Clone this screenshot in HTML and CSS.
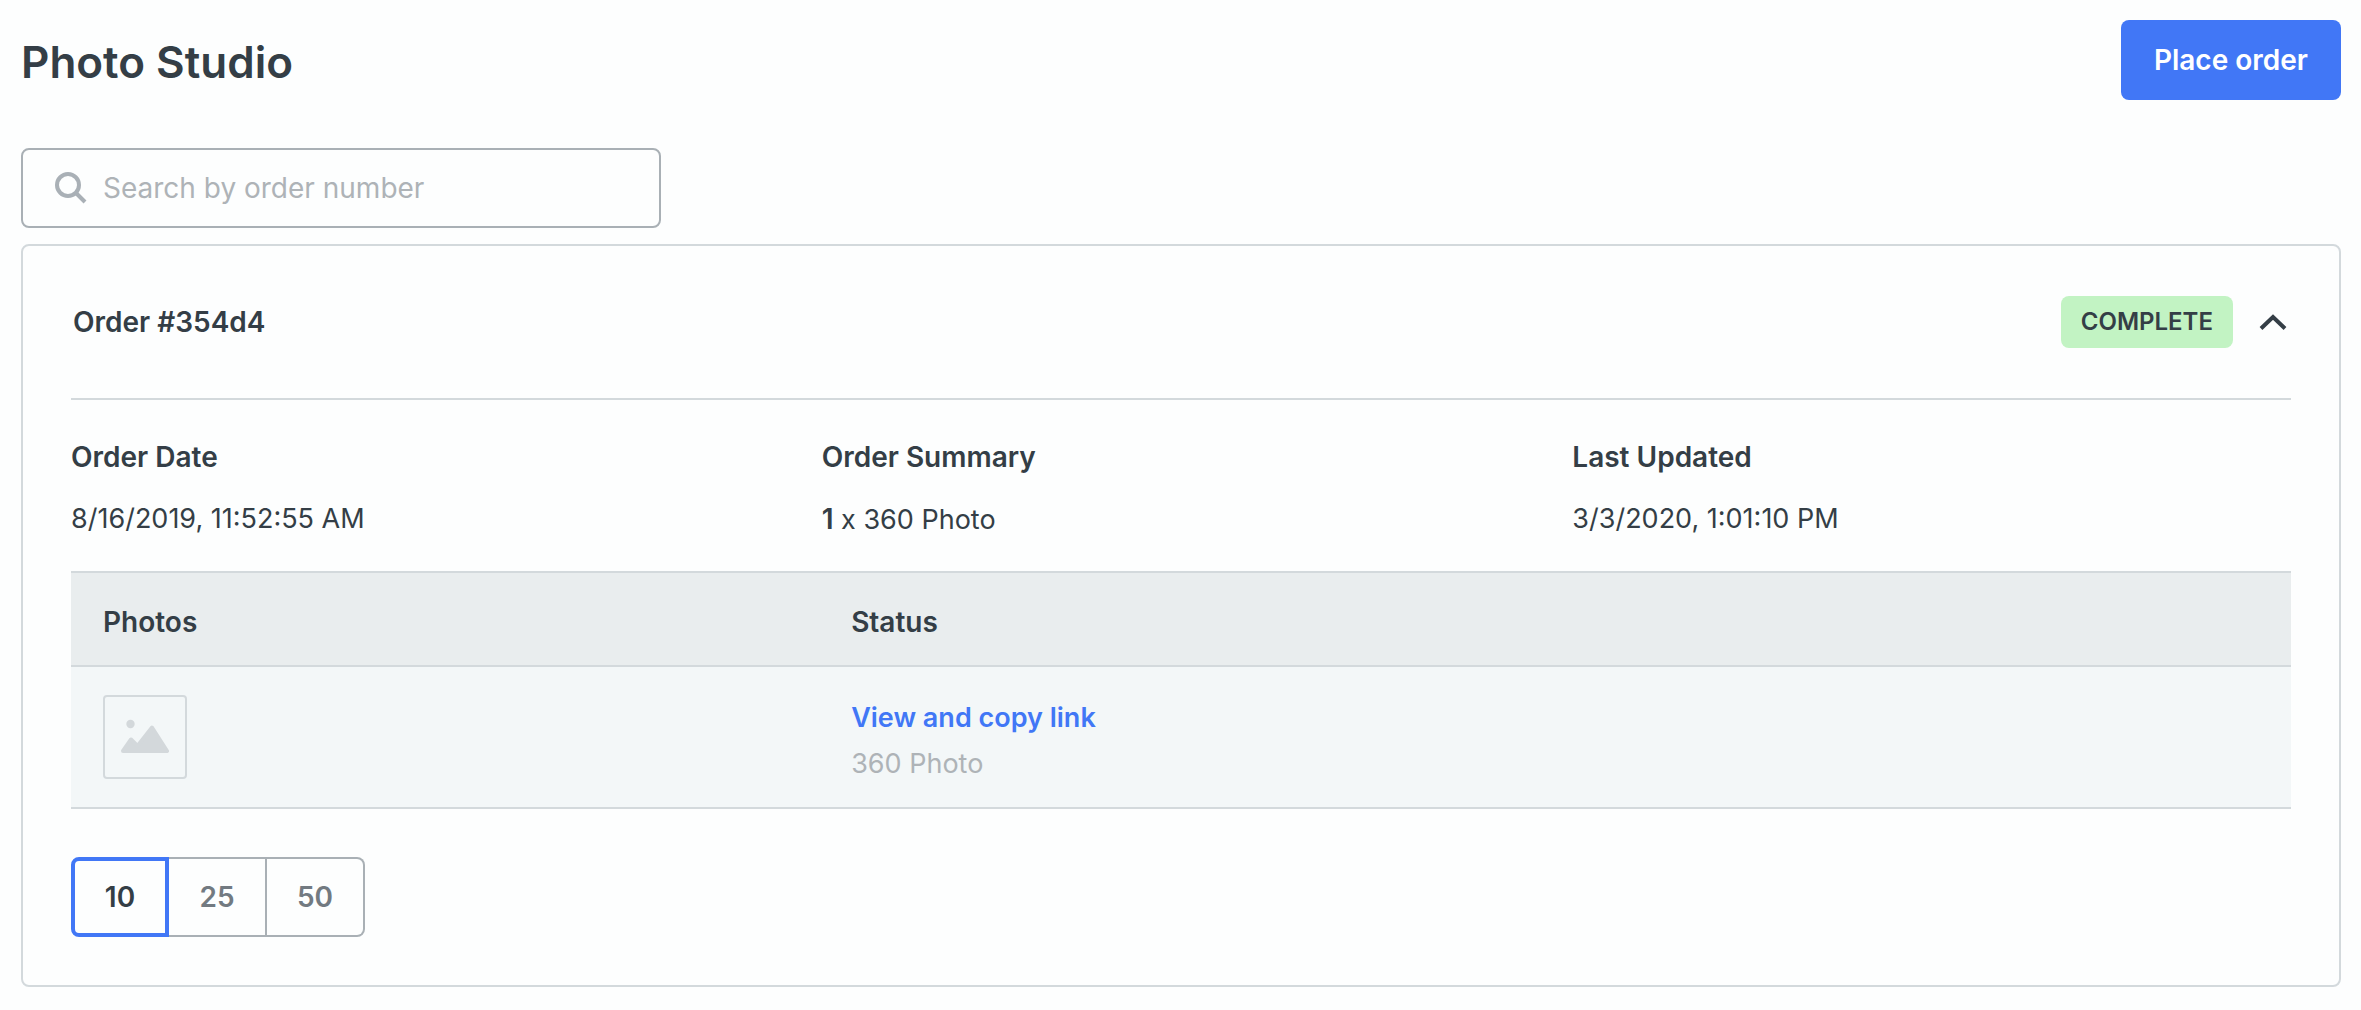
FILE: index.html
```
<!DOCTYPE html>
<html lang="en">
<head>
    <meta charset="UTF-8">
    <meta name="viewport" content="width=device-width, initial-scale=1.0">
    <title>Photo Studio</title>
    <link rel="stylesheet" href="styles.css">
</head>
<body>
    <main class="page">
        <header class="page-header">
            <h1>Photo Studio</h1>
            <button type="button" class="button-primary">Place order</button>
        </header>

        <label class="search" for="orderSearch">
            <svg class="search-icon" viewBox="0 0 32 32" aria-hidden="true">
                <circle cx="13" cy="13" r="11" fill="none" stroke="currentColor" stroke-width="4"/>
                <path d="M20.5 20.5L30 30" fill="none" stroke="currentColor" stroke-width="4"/>
            </svg>
            <input type="text" id="orderSearch" name="orderSearch" placeholder="Search by order number" aria-label="Search by order number">
        </label>

        <section class="card">
            <div class="order-header">
                <h2>Order #354d4</h2>
                <div class="order-state">
                    <span class="badge">COMPLETE</span>
                    <button type="button" class="toggle" aria-label="Collapse order" aria-expanded="true">
                        <svg viewBox="0 0 28 18" aria-hidden="true">
                            <path d="M2 15.5L14 4L26 15.5" fill="none" stroke="currentColor" stroke-width="4"/>
                        </svg>
                    </button>
                </div>
            </div>

            <div class="order-info">
                <div>
                    <h3>Order Date</h3>
                    <p>8/16/2019, 11:52:55 AM</p>
                </div>
                <div>
                    <h3>Order Summary</h3>
                    <p><strong>1</strong> x 360 Photo</p>
                </div>
                <div>
                    <h3>Last Updated</h3>
                    <p>3/3/2020, 1:01:10 PM</p>
                </div>
            </div>

            <table class="photos">
                <thead>
                    <tr>
                        <th class="photo-col">Photos</th>
                        <th>Status</th>
                    </tr>
                </thead>
                <tbody>
                    <tr>
                        <td>
                            <div class="thumb">
                                <svg viewBox="0 0 48 36" aria-hidden="true">
                                    <circle cx="9.5" cy="5" r="4.2" fill="currentColor"/>
                                    <path d="M2 32L10 20.5L16.5 27L31 8.5L46 32Z" fill="currentColor" stroke="currentColor" stroke-width="4" stroke-linejoin="round"/>
                                </svg>
                            </div>
                        </td>
                        <td class="status-cell">
                            <a href="#">View and copy link</a>
                            <div class="photo-type">360 Photo</div>
                        </td>
                    </tr>
                </tbody>
            </table>

            <div class="page-size" role="group" aria-label="Orders per page">
                <button type="button" class="active" aria-pressed="true">10</button>
                <button type="button" aria-pressed="false">25</button>
                <button type="button" aria-pressed="false">50</button>
            </div>
        </section>
    </main>
</body>
</html>
```
FILE: styles.css
```
* {
    box-sizing: border-box;
}

body {
    margin: 0;
    background-color: #fdfefe;
    color: #343e46;
    font-family: Inter, "Liberation Sans", sans-serif;
    font-size: 28px;
    line-height: 40px;
}

h1,
h2,
h3,
p {
    margin: 0;
}

h2,
h3,
th,
strong {
    font-size: 28px;
    font-weight: 600;
}

button,
input {
    font: inherit;
    color: inherit;
}

button {
    cursor: pointer;
}

.page {
    padding: 20px 20px 24px 21px;
}

.page-header {
    display: flex;
    justify-content: space-between;
    align-items: center;
    margin-bottom: 48px;
}

h1 {
    padding-top: 4px;
    font-size: 44px;
    font-weight: 600;
    line-height: 56px;
}

.button-primary {
    height: 80px;
    padding: 0 33px;
    border: none;
    border-radius: 8px;
    background-color: #4177f6;
    color: #fff;
    font-weight: 600;
}

.search {
    display: flex;
    align-items: center;
    gap: 16px;
    width: 100%;
    max-width: 640px;
    height: 80px;
    margin-bottom: 16px;
    padding: 0 32px;
    border: 2px solid #a9b0b5;
    border-radius: 8px;
}

.search-icon {
    flex: none;
    width: 32px;
    height: 32px;
    color: #a9b0b6;
}

.search input {
    flex: 1;
    min-width: 0;
    padding: 0;
    border: none;
    outline: none;
    background: none;
}

.search input::placeholder {
    color: #aeb3b7;
    opacity: 1;
}

.card {
    padding: 48px;
    border: 2px solid #d3d9dc;
    border-radius: 8px;
}

/* order title row */
.order-header {
    display: flex;
    justify-content: space-between;
    align-items: center;
    padding: 2px 4px 50px 2px;
    border-bottom: 2px solid #d3d9dc;
}

.order-state {
    display: flex;
    align-items: center;
    gap: 26px;
}

.badge {
    padding: 6px 20px;
    border-radius: 8px;
    background-color: #c2f3c3;
    font-size: 24px;
    font-weight: 600;
}

.toggle {
    display: flex;
    padding: 0;
    border: none;
    background: none;
}

.toggle svg {
    width: 28px;
    height: 18px;
}

.order-info {
    display: grid;
    grid-template-columns: repeat(3, 1fr);
    gap: 32px;
    padding: 37px 0 31px;
}

.order-info h3 {
    margin-bottom: 22px;
}

.order-info p {
    font-size: 27px;
}

/* photos table */
.photos {
    width: 100%;
    border-collapse: separate;
    border-spacing: 0;
    border-top: 2px solid #d3d9dc;
    table-layout: fixed;
}

.photos th,
.photos td {
    border-bottom: 2px solid #d3d9dc;
    text-align: left;
}

.photos th {
    padding: 29px 32px 23px;
    background-color: #e9edee;
}

.photos td {
    padding: 28px 32px;
    background-color: #f3f7f8;
    font-size: 27px;
}

.photos .status-cell {
    padding: 31px 32px 23px;
}

.photo-col {
    width: 33.7%;
}

.photos a {
    color: #4177f6;
    font-weight: 600;
    text-decoration: none;
}

.photo-type {
    margin-top: 6px;
    color: #aeb3b7;
}

.thumb {
    display: flex;
    justify-content: center;
    align-items: center;
    width: 84px;
    height: 84px;
    border: 2px solid #d3d9dc;
    border-radius: 4px;
    color: #d3d8db;
}

.thumb svg {
    width: 48px;
    height: 36px;
}

/* page size switch */
.page-size {
    display: inline-flex;
    margin-top: 48px;
    vertical-align: top;
}

.page-size button {
    width: 98px;
    height: 80px;
    padding: 0;
    border: 2px solid #a9b0b5;
    border-left: none;
    background: none;
    color: #727a81;
    font-weight: 600;
}

.page-size button:last-child {
    border-radius: 0 8px 8px 0;
}

.page-size .active {
    border: 4px solid #4177f6;
    border-radius: 8px 0 0 8px;
    color: #343e46;
}
```
